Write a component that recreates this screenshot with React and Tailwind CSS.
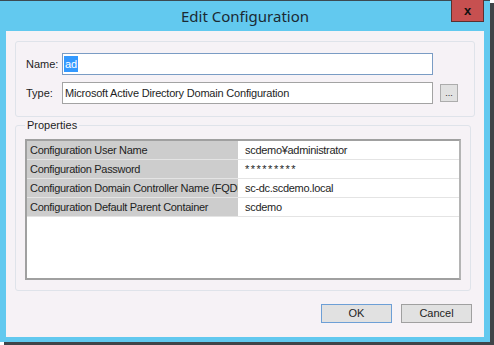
const rows = [
  ["Configuration User Name", "scdemo¥administrator"],
  ["Configuration Password", "*********"],
  ["Configuration Domain Controller Name (FQDN)", "sc-dc.scdemo.local"],
  ["Configuration Default Parent Container", "scdemo"],
];

export default function App() {
  return (
    <div className="h-[345px] w-[494px] overflow-hidden bg-white font-['Liberation_Sans',Arial,sans-serif] text-[11px] text-[#1e1e1e]">
      <div className="flex h-[342px] w-[490px] flex-col border-t border-[#3c4a52] bg-[#62c9ef] shadow-[4px_3px_0_0_#404448]">
        {/* title bar */}
        <div className="relative flex h-[30px] shrink-0 items-center justify-center">
          <span className="font-['Noto_Sans',sans-serif] text-[15px] text-[#1b2a33]">Edit Configuration</span>
          <div className="absolute right-[6px] top-[-1px] flex h-[22px] w-[33px] items-center justify-center border border-t-0 border-[#5a3030] bg-[#c75050] text-[13px] font-bold text-[#111]">
            x
          </div>
        </div>

        {/* client area */}
        <div className="mx-[6px] mb-[5px] flex flex-1 flex-col bg-[#f6f2f6] px-[9px] pt-[10px]">
          <div className="flex h-[76px] flex-col gap-[7px] rounded-[3px] border border-[#dfe3ea] pl-[10px] pt-[11px]">
            <div className="flex items-center">
              <span className="w-[36px]">Name:</span>
              <div className="flex h-[22px] w-[371px] items-center border border-[#7a9cc4] bg-white px-[1px]">
                <span className="bg-[#3399ff] px-[1px] leading-[16px] text-white">ad</span>
              </div>
            </div>
            <div className="flex items-center">
              <span className="w-[36px]">Type:</span>
              <div className="flex h-[22px] w-[371px] items-center border border-[#a3a3a3] bg-white px-[2px] tracking-[-0.2px]">
                Microsoft Active Directory Domain Configuration
              </div>
              <div className="ml-[7px] flex h-[18px] w-[18px] items-end justify-center border border-[#acacac] bg-[#e1e1e1] pb-[3px] text-[9px] leading-none">
                ...
              </div>
            </div>
          </div>

          <fieldset className="mt-[1px] w-[456px] rounded-[3px] border border-[#dfe3ea] px-[9px] pb-[10px]">
            <legend className="px-[2px] leading-[14px] text-[#1e1e1e]">Properties</legend>
            <div className="mt-[7px] h-[141px] border-2 border-[#a0a0a0] border-r-[#b4b4b4] bg-white">
              {rows.map(([k, v]) => (
                <div key={k} className="flex h-[19px] border-b border-[#e4e4e4]">
                  <div className="w-[212px] shrink-0 overflow-hidden whitespace-nowrap border-r border-white bg-[#cdcdcd] pl-[3px] leading-[18px] tracking-[-0.3px]">
                    {k}
                  </div>
                  <div className={v.startsWith("*") ? "pl-[6px] leading-[18px] tracking-[1.5px]" : "pl-[6px] leading-[18px] tracking-[-0.3px]"}>
                    {v}
                  </div>
                </div>
              ))}
            </div>
          </fieldset>

          <div className="mt-[13px] flex justify-end gap-[9px] pr-[3px]">
            <div className="flex h-[19px] w-[71px] items-center justify-center border border-[#6d9fd6] bg-[#e1e1e1]">OK</div>
            <div className="flex h-[19px] w-[71px] items-center justify-center border border-[#a0a0a0] bg-[#e1e1e1]">Cancel</div>
          </div>
        </div>
      </div>
    </div>
  );
}
